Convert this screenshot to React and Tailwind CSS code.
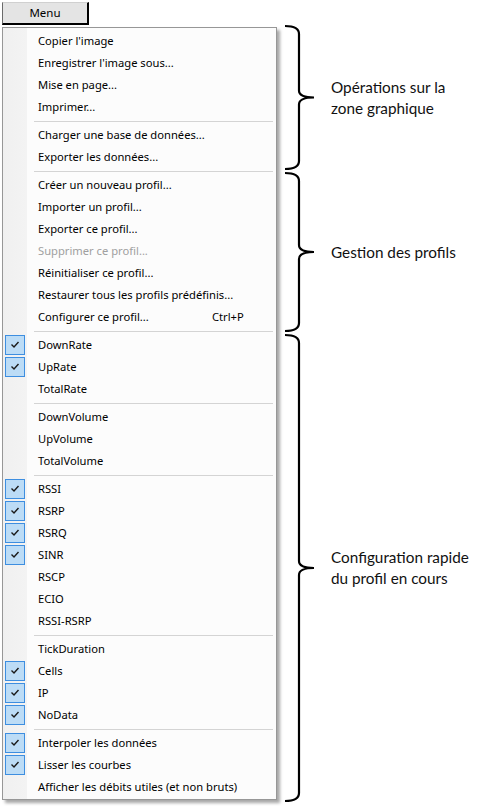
import React from 'react';

const groups = [
    [
        { label: "Copier l'image" },
        { label: "Enregistrer l'image sous..." },
        { label: 'Mise en page...' },
        { label: 'Imprimer...' },
    ],
    [
        { label: 'Charger une base de données...' },
        { label: 'Exporter les données...' },
    ],
    [
        { label: 'Créer un nouveau profil...' },
        { label: 'Importer un profil...' },
        { label: 'Exporter ce profil...' },
        { label: 'Supprimer ce profil...', disabled: true },
        { label: 'Réinitialiser ce profil...' },
        { label: 'Restaurer tous les profils prédéfinis...' },
        { label: 'Configurer ce profil...', shortcut: 'Ctrl+P' },
    ],
    [
        { label: 'DownRate', checked: true },
        { label: 'UpRate', checked: true },
        { label: 'TotalRate' },
    ],
    [
        { label: 'DownVolume' },
        { label: 'UpVolume' },
        { label: 'TotalVolume' },
    ],
    [
        { label: 'RSSI', checked: true },
        { label: 'RSRP', checked: true },
        { label: 'RSRQ', checked: true },
        { label: 'SINR', checked: true },
        { label: 'RSCP' },
        { label: 'ECIO' },
        { label: 'RSSI-RSRP' },
    ],
    [
        { label: 'TickDuration' },
        { label: 'Cells', checked: true },
        { label: 'IP', checked: true },
        { label: 'NoData', checked: true },
    ],
    [
        { label: 'Interpoler les données', checked: true },
        { label: 'Lisser les courbes', checked: true },
        { label: 'Afficher les débits utiles (et non bruts)' },
    ],
];

const sections = [
    { height: 147, lines: ['Opérations sur la', 'zone graphique'] },
    { height: 162, lines: ['Gestion des profils'] },
    { height: 470, lines: ['Configuration rapide', 'du profil en cours'] },
];

const Check = () => (
    <div className="w-[20px] h-[20px] border border-[#3d8ee0] bg-[#bcdcf6] flex items-center justify-center">
        <svg width="18" height="18" viewBox="0 0 18 18">
            <path d="M5.5 8.5 L8 11 L12.5 6" fill="none" stroke="#1a1a1a" strokeWidth="1.4" />
        </svg>
    </div>
);

const MenuItem = ({ item }) => (
    <div className="flex h-[22px] items-center">
        <div className="w-[35px] pl-[2px] flex items-center shrink-0">
            {item.checked && <Check />}
        </div>
        <span className={item.disabled ? 'text-[#a0a0a0]' : 'text-black'}>{item.label}</span>
        {item.shortcut && <span className="ml-auto w-[64px] text-black">{item.shortcut}</span>}
    </div>
);

const Brace = ({ h }) => {
    const m = h / 2;
    const d = `M2 2 Q16 2 16 10 V${m - 7} Q16 ${m} 31 ${m} Q16 ${m} 16 ${m + 7} V${h - 10} Q16 ${h - 2} 2 ${h - 2}`;
    return (
        <svg width="34" height={h} viewBox={`0 0 34 ${h}`} className="shrink-0">
            <path d={d} fill="none" stroke="#000" strokeWidth="2.2" />
        </svg>
    );
};

export default function App() {
    return (
        <div className="w-[478px] h-[806px] bg-white flex pl-[2px] pt-[2px] overflow-hidden">
            <div className="w-[275px] shrink-0 flex flex-col">
                <div
                    className="w-[87px] h-[23px] flex items-center justify-center bg-[#e4e4e4] border-l border-t border-l-[#6a6a6a] border-t-[#d0d0d0] border-r-2 border-b-2 border-r-black border-b-black text-[11.5px] text-black"
                    style={{ fontFamily: '"Noto Sans", sans-serif' }}
                >
                    Menu
                </div>
                <div
                    className="mt-[2px] border border-[#979797] pt-[2px] pb-[1px] bg-[linear-gradient(to_right,#f0f0f0_0,#f3f3f3_24px,#fcfcfc_24px)] shadow-[3px_3px_3px_rgba(0,0,0,0.35)] text-[11.2px] leading-none"
                    style={{ fontFamily: '"Noto Sans", sans-serif' }}
                >
                    {groups.map((group, gi) => (
                        <React.Fragment key={gi}>
                            {gi > 0 && (
                                <div className="h-[6px] flex items-center pl-[31px] pr-[3px]">
                                    <div className="h-px w-full bg-[#d4d4d4]" />
                                </div>
                            )}
                            {group.map((item) => (
                                <MenuItem key={item.label} item={item} />
                            ))}
                        </React.Fragment>
                    ))}
                </div>
            </div>
            <div className="ml-[6px] pt-[22px] flex flex-col">
                {sections.map((s) => (
                    <div key={s.height} className="flex items-center" style={{ height: s.height }}>
                        <Brace h={s.height} />
                        <div
                            className="ml-[14px] text-[15.3px] leading-[21px] text-[#111] whitespace-nowrap"
                            style={{ fontFamily: 'Lato, sans-serif' }}
                        >
                            {s.lines.map((l) => (
                                <div key={l}>{l}</div>
                            ))}
                        </div>
                    </div>
                ))}
            </div>
        </div>
    );
}
